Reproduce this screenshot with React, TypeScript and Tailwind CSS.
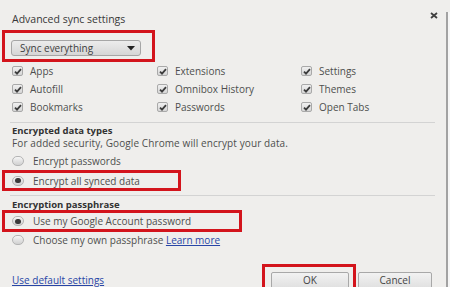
import { FunctionComponent, ReactNode } from "react";

const Check: FunctionComponent = () => (
  <span className="flex h-[10px] w-[11px] shrink-0 items-center justify-center rounded-[2px] border border-[#a9a9a9] bg-linear-to-b from-[#f0f0f0] to-[#d6d6d6]">
    <svg width="8" height="7" viewBox="0 0 8 7">
      <path d="M1 3.6 L3 5.6 L7 1.2" fill="none" stroke="#3c3c3c" strokeWidth="1.8" />
    </svg>
  </span>
);

const Radio: FunctionComponent<{ on?: boolean }> = ({ on }) => (
  <span className="flex h-[10px] w-[12px] shrink-0 items-center justify-center rounded-full border border-[#b4b4b4] bg-linear-to-b from-[#f6f6f6] to-[#d0d0d0]">
    {on && <span className="h-[5px] w-[6px] rounded-full bg-[#3a3a3a]" />}
  </span>
);

const Mark: FunctionComponent<{ className: string; children: ReactNode }> = ({
  className,
  children,
}) => <div className={`border-[3px] border-[#d3141c] ${className}`}>{children}</div>;

const items = [
  "Apps",
  "Extensions",
  "Settings",
  "Autofill",
  "Omnibox History",
  "Themes",
  "Bookmarks",
  "Passwords",
  "Open Tabs",
];

const App: FunctionComponent = () => (
  <div className="flex h-[287px] w-[450px] overflow-hidden bg-[#efeeec] font-['Open_Sans',sans-serif] text-[10px] text-[#4e4e4e]">
    <div className="w-[446px] shrink-0">
      {/* header */}
      <div className="flex h-[30px] justify-between pr-[8px]">
        <h1 className="pl-[12px] pt-[13px] text-[10.5px] leading-[13px] text-[#383838]">
          Advanced sync settings
        </h1>
        <svg width="8" height="7" viewBox="0 0 8 7" className="mt-[12px]">
          <path d="M1 1 L7 6 M7 1 L1 6" stroke="#404040" strokeWidth="1.8" />
        </svg>
      </div>

      <Mark className="ml-[2px] h-[32px] w-[153px] pl-[6px] pt-[7px]">
        <div className="flex h-[16px] w-[130px] items-center justify-between rounded-[3px] border border-[#a6a6a6] bg-linear-to-b from-[#ececec] to-[#d6d6d6] pl-[8px] pr-[5px] text-[#3e3e3e]">
          <span className="leading-[12px]">Sync everything</span>
          <svg width="8" height="5" viewBox="0 0 8 5">
            <path d="M0 0 H8 L4 4.5 Z" fill="#222" />
          </svg>
        </div>
      </Mark>

      <div className="ml-[12px] grid grid-cols-[145px_144px_130px]">
        {items.map((name) => (
          <label key={name} className="flex h-[18px] items-center gap-[7px]">
            <Check />
            <span className="leading-[12px]">{name}</span>
          </label>
        ))}
      </div>

      <hr className="ml-[10px] mr-[11px] mt-[6px] border-0 border-t border-[#d3d3d3]" />

      <div className="pl-[12px] pt-[2px]">
        <h2 className="text-[9.5px] font-bold leading-[11px] text-[#333]">
          Encrypted data types
        </h2>
        <p className="mt-[2px] leading-[10px] tracking-[0.1px]">
          For added security, Google Chrome will encrypt your data.
        </p>
      </div>
      <div className="mt-[4px] flex h-[18px] items-center gap-[9px] pl-[12px]">
        <Radio />
        <span className="leading-[12px]">Encrypt passwords</span>
      </div>
      <Mark className="ml-[2px] flex h-[21px] w-[179px] items-center gap-[9px] pl-[7px]">
        <Radio on />
        <span className="leading-[12px]">Encrypt all synced data</span>
      </Mark>

      <hr className="ml-[10px] mr-[11px] mt-[4px] border-0 border-t border-[#d3d3d3]" />

      <h2 className="pl-[12px] pt-[3px] text-[9.5px] font-bold leading-[11px] text-[#333]">
        Encryption passphrase
      </h2>
      <Mark className="ml-[2px] flex h-[22px] w-[240px] items-center gap-[9px] pl-[7px]">
        <Radio on />
        <span className="leading-[12px]">Use my Google Account password</span>
      </Mark>
      <div className="flex h-[16px] items-center gap-[9px] pl-[12px]">
        <Radio />
        <span className="leading-[12px]">
          Choose my own passphrase{" "}
          <a className="text-[#2845a6] underline">Learn more</a>
        </span>
      </div>

      {/* footer */}
      <div className="mt-[16px] flex items-start justify-between pr-[14px]">
        <a className="ml-[12px] mt-[10px] leading-[12px] text-[#2845a6] underline">
          Use default settings
        </a>
        <div className="flex items-start gap-[2px]">
          <div className="h-[30px] w-[94px] border-[3px] border-b-0 border-[#d3141c] pl-[6px] pt-[5px]">
            <button className="h-[22px] w-[78px] rounded-[2px] border border-[#a8a8a8] bg-linear-to-b from-[#f2f2f2] to-[#dadada] pb-[6px] leading-[12px] text-[#444]">
              OK
            </button>
          </div>
          <button className="mt-[8px] h-[22px] w-[74px] rounded-[2px] border border-[#a8a8a8] bg-linear-to-b from-[#f2f2f2] to-[#dadada] pb-[6px] leading-[12px] text-[#444]">
            Cancel
          </button>
        </div>
      </div>
    </div>
    <div className="mt-[12px] w-[4px] border-l-2 border-[#a2a2a2] bg-[#f6f6f6]" />
  </div>
);

export default App;
